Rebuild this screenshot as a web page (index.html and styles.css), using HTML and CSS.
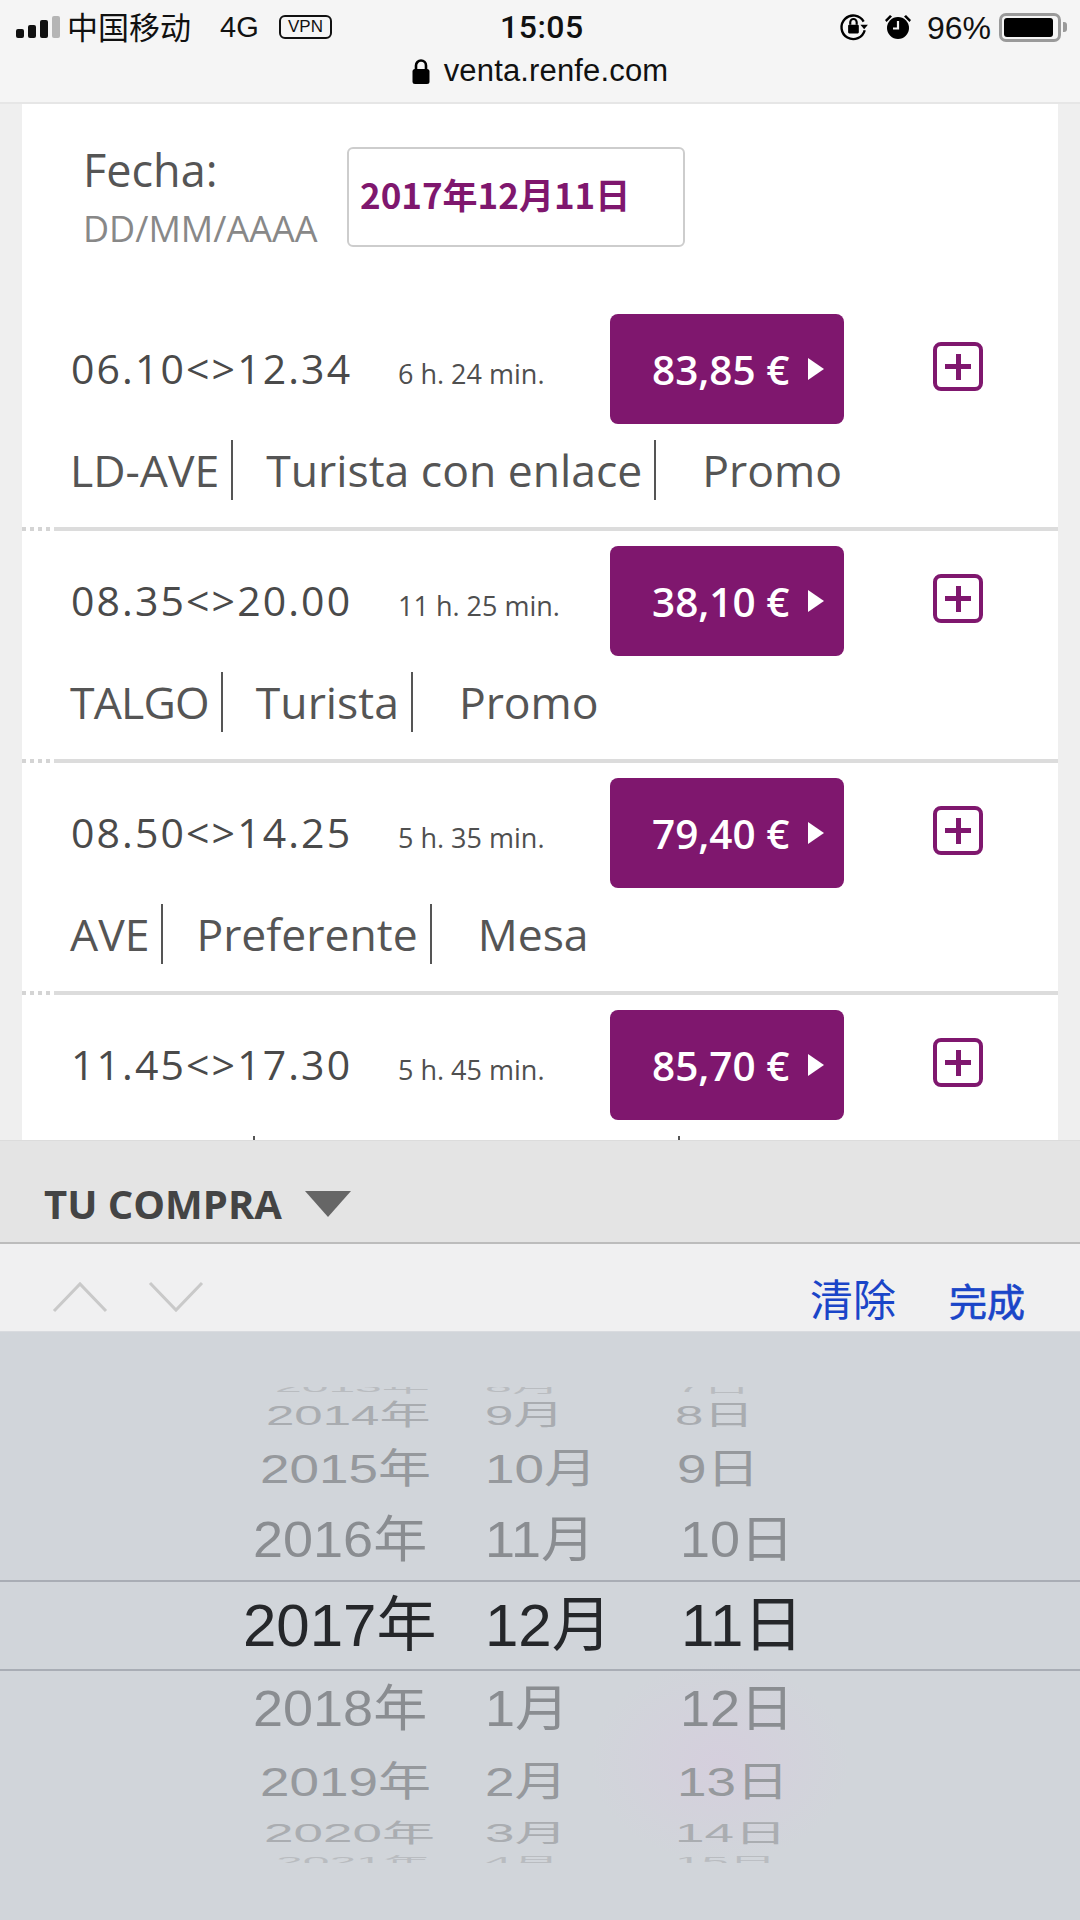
FILE: index.html
```html
<!DOCTYPE html>
<html lang="es">
<head>
<meta charset="utf-8">
<title>venta.renfe.com</title>
<link rel="stylesheet" href="styles.css">
</head>
<body>
<div class="screen">
  <header class="topbar">
    <div class="status">
      <div class="status-left">
        <span class="signal"><i class="b1"></i><i class="b2"></i><i class="b3"></i><i class="b4"></i></span>
        <span class="carrier">中国移动</span>
        <span class="net">4G</span>
        <span class="vpn">VPN</span>
      </div>
      <span class="clock">15:05</span>
      <div class="status-right">
        <svg class="ico-rot" width="30" height="30" viewBox="0 0 28 28"><path d="M23 9A11 11 0 1 0 24 17" fill="none" stroke="#000" stroke-width="2.2"/><path d="M20 12h7l-3.500 4z" fill="#000"/><rect x="8.500" y="12" width="10" height="8" rx="1" fill="#000"/><path d="M10.500 12V9.500a3 3 0 0 1 6 0V12" fill="none" stroke="#000" stroke-width="2"/></svg>
        <svg class="ico-alarm" width="28" height="28" viewBox="0 0 28 28"><circle cx="14" cy="15" r="11" fill="#000"/><path d="M14 8v7.500h-5" fill="none" stroke="#f4f4f4" stroke-width="2.200"/><path d="M1 7l5-5 2 1.500-5.500 5.500zM27 7l-5-5-2 1.500 5.500 5.500z" fill="#000"/></svg>
        <span class="pct">96%</span>
        <span class="battery"><span class="battery-fill"></span></span>
        <span class="battery-tip"></span>
      </div>
    </div>
    <div class="url">
      <svg width="18" height="25" viewBox="0 0 18 25"><rect x="0.500" y="10" width="17" height="15" rx="2.500" fill="#000"/><path d="M4 11V6.500a5 5 0 0 1 10 0V11" fill="none" stroke="#000" stroke-width="2.600"/></svg>
      <span>venta.renfe.com</span>
    </div>
  </header>

  <main class="main">
    <div class="card">
      <section class="date-row">
        <div class="date-label">
          <div class="fecha">Fecha:</div>
          <div class="fmt">DD/MM/AAAA</div>
        </div>
        <div class="date-input">2017年12月11日</div>
      </section>

      <article class="trip">
        <div class="trip-top">
          <div class="times"><span class="time">06.10&lt;&gt;12.34</span><span class="dur">6 h. 24 min.</span></div>
          <button class="price">83,85 €<span class="tri"></span></button>
          <span class="plus"></span>
        </div>
        <div class="trip-tags"><span class="tag">LD-AVE</span><span class="tag">Turista con enlace</span><span class="tag last">Promo</span></div>
      </article>
      <div class="divider"></div>

      <article class="trip">
        <div class="trip-top">
          <div class="times"><span class="time">08.35&lt;&gt;20.00</span><span class="dur">11 h. 25 min.</span></div>
          <button class="price">38,10 €<span class="tri"></span></button>
          <span class="plus"></span>
        </div>
        <div class="trip-tags"><span class="tag tight">TALGO</span><span class="tag">Turista</span><span class="tag last">Promo</span></div>
      </article>
      <div class="divider"></div>

      <article class="trip">
        <div class="trip-top">
          <div class="times"><span class="time">08.50&lt;&gt;14.25</span><span class="dur">5 h. 35 min.</span></div>
          <button class="price">79,40 €<span class="tri"></span></button>
          <span class="plus"></span>
        </div>
        <div class="trip-tags"><span class="tag">AVE</span><span class="tag">Preferente</span><span class="tag last">Mesa</span></div>
      </article>
      <div class="divider"></div>

      <article class="trip">
        <div class="trip-top">
          <div class="times"><span class="time">11.45&lt;&gt;17.30</span><span class="dur">5 h. 45 min.</span></div>
          <button class="price">85,70 €<span class="tri"></span></button>
          <span class="plus"></span>
        </div>
        <div class="trip-tags"><span class="stub stub-a"></span><span class="stub stub-b"></span></div>
      </article>
    </div>
  </main>

  <section class="dock">
    <span class="dock-title">TU COMPRA</span>
    <span class="dock-tri"></span>
  </section>

  <section class="toolbar">
    <div class="chevrons">
      <svg width="56" height="32" viewBox="0 0 56 32"><path d="M2 30L28 3l26 27" fill="none" stroke="#c9c9c9" stroke-width="3"/></svg>
      <svg width="56" height="32" viewBox="0 0 56 32"><path d="M2 2l26 27L54 2" fill="none" stroke="#c9c9c9" stroke-width="3"/></svg>
    </div>
    <span class="tool-clear">清除</span>
    <span class="tool-done">完成</span>
  </section>

  <section class="picker">
    <div class="wheel">
      <div class="wrow w0"><span class="y">2013年</span><span class="m">8月</span><span class="d">7日</span></div>
      <div class="wrow w1"><span class="y">2014年</span><span class="m">9月</span><span class="d">8日</span></div>
      <div class="wrow w2"><span class="y">2015年</span><span class="m">10月</span><span class="d">9日</span></div>
      <div class="wrow w3"><span class="y">2016年</span><span class="m">11月</span><span class="d">10日</span></div>
      <div class="wrow w4"><span class="y">2017年</span><span class="m">12月</span><span class="d">11日</span></div>
      <div class="wrow w5"><span class="y">2018年</span><span class="m">1月</span><span class="d">12日</span></div>
      <div class="wrow w6"><span class="y">2019年</span><span class="m">2月</span><span class="d">13日</span></div>
      <div class="wrow w7"><span class="y">2020年</span><span class="m">3月</span><span class="d">14日</span></div>
      <div class="wrow w8"><span class="y">2021年</span><span class="m">4月</span><span class="d">15日</span></div>
    </div>
  </section>
</div>
</body>
</html>
```

FILE: styles.css
```css
* { box-sizing: border-box; }
html, body { margin: 0; padding: 0; }
body { width: 1080px; height: 1920px; overflow: hidden; font-family: "Open Sans", "Noto Sans CJK SC", sans-serif; }
.screen { width: 1080px; height: 1920px; display: flex; flex-direction: column; overflow: hidden; background: #efefef; }

/* Top bar */
.topbar { height: 104px; flex: none; background: #f5f5f5; border-bottom: 2px solid #e6e6e6; font-family: "Liberation Sans", "Noto Sans CJK SC", sans-serif; color: #111; }
.status { height: 54px; position: relative; display: flex; align-items: center; justify-content: space-between; padding: 0 13px 0 16px; }
.status-left, .status-right { display: flex; align-items: center; }
.signal { display: flex; align-items: flex-end; gap: 4px; height: 22px; margin-right: 7px; }
.signal i { display: block; width: 8px; border-radius: 2px; background: #111; }
.signal .b1 { height: 9px; }
.signal .b2 { height: 13px; }
.signal .b3 { height: 18px; }
.signal .b4 { height: 22px; background: #b5b5b5; }
.carrier { font-size: 31px; width: 153px; margin-top: -4px; }
.net { font-size: 29px; width: 59px; }
.vpn { font-size: 17px; line-height: 20px; height: 24px; width: 53px; text-align: center; border: 2px solid #111; border-radius: 6px; }
.clock { position: absolute; left: 500px; top: 9px; font-family: Roboto, sans-serif; font-size: 32px; font-weight: 500; line-height: 36px; letter-spacing: 0.500px; }
.ico-rot { margin-right: 15px; margin-left: -3px; }
.ico-alarm { margin-right: 15px; }
.pct { font-size: 32px; margin-right: 8px; margin-top: 2px; }
.battery { width: 62px; height: 29px; border: 3px solid #9a9a9a; border-radius: 7px; padding: 2px; display: block; }
.battery-fill { display: block; width: 94%; height: 100%; background: #000; border-radius: 3px; }
.battery-tip { width: 4px; height: 10px; margin-left: 2px; background: #9a9a9a; border-radius: 0 3px 3px 0; }
.url { display: flex; justify-content: center; align-items: center; gap: 14px; font-size: 31px; line-height: 36px; letter-spacing: 0.150px; margin-top: -1px; }

/* Main list */
.main { height: 1036px; flex: none; overflow: hidden; padding: 0 22px; background: #efefef; }
.card { width: 1036px; background: #fff; color: #4d4d4d; }
.date-row { height: 195px; display: flex; padding: 39px 0 0 61px; }
.date-label { width: 264px; }
.fecha { font-size: 45px; line-height: 52px; color: #555; margin-top: 1px; }
.fmt { font-size: 36px; line-height: 44px; color: #888; margin-top: 11px; }
.date-input { width: 338px; height: 100px; margin-top: 4px; border: 2px solid #cdcdcd; border-radius: 6px; padding: 19px 0 0 11px; font-size: 35px; line-height: 52px; font-weight: 700; color: #7f176e; font-family: "Noto Sans CJK SC", sans-serif; }

.trip { height: 228px; padding: 15px 0 0 48px; }
.trip-top { display: flex; align-items: center; height: 110px; }
.times { width: 540px; display: flex; align-items: baseline; margin-top: -3px; padding-left: 1px; }
.time { width: 327px; font-size: 41px; letter-spacing: 2.100px; color: #4a4a4a; white-space: nowrap; }
.dur { font-size: 27px; color: #4f4f4f; white-space: nowrap; }
.price { width: 234px; height: 110px; background: #7f176e; border: 0; border-radius: 8px; color: #fff; font-family: "Open Sans", sans-serif; font-size: 40.500px; font-weight: 600; display: flex; align-items: center; padding: 0 0 0 42px; white-space: nowrap; }
.tri { width: 0; height: 0; margin-left: 19px; border-left: 16px solid #fff; border-top: 11px solid transparent; border-bottom: 11px solid transparent; }
.plus { width: 50px; height: 49px; margin: -5px 0 0 89px; border: 4px solid #7f176e; border-radius: 8px; background: linear-gradient(#7f176e, #7f176e) center / 26px 5px no-repeat, linear-gradient(#7f176e, #7f176e) center / 5px 26px no-repeat; }
.trip-tags { display: flex; height: 60px; margin-top: 16px; font-size: 44.500px; line-height: 60px; color: #555; }
.tag { padding-right: 12px; margin-right: 33px; border-right: 2px solid #555; white-space: nowrap; }
.tag + .tag { margin-right: 46px; }
.tag.tight { letter-spacing: -0.800px; }
.tag.last { border-right: 0; padding: 0; margin: 0; }
.stub { display: block; height: 60px; border-right: 2px solid #555; }
.stub-a { width: 185px; }
.stub-b { width: 425px; }
.divider { height: 4px; background: linear-gradient(#dcdcdc, #dcdcdc) 32px 0 / 100% 100% no-repeat, repeating-linear-gradient(90deg, #d4d4d4 0 4px, transparent 4px 8px); }

/* Dock */
.dock { height: 104px; flex: none; background: #e4e4e4; border-top: 1px solid #dcdcdc; border-bottom: 2px solid #bcbcbc; display: flex; align-items: center; padding: 24px 0 0 44px; }
.dock-title { font-size: 40px; font-weight: 700; color: #444; white-space: nowrap; }
.dock-tri { width: 0; height: 0; margin-left: 23px; border-top: 26px solid #666; border-left: 23px solid transparent; border-right: 23px solid transparent; }

/* Toolbar */
.toolbar { height: 87px; flex: none; background: #f0f0f1; display: flex; align-items: center; padding: 0 55px 0 52px; font-family: "Noto Sans CJK SC", sans-serif; color: #1a45c8; }
.chevrons { display: flex; gap: 40px; flex: 1; margin-top: 18px; }
.tool-clear { font-size: 43px; margin-right: 53px; margin-top: 18px; }
.tool-done { font-size: 38px; -webkit-text-stroke: 0.700px #1a45c8; margin-top: 24px; }

/* Picker */
.picker { flex: 1; padding-top: 55px; background: radial-gradient(ellipse 130px 100px at 720px 430px, #d5cfdd 0%, rgba(213, 207, 221, 0) 100%), #d1d5da; border-top: 1px solid #d9dbdf; font-family: "Liberation Sans", "Noto Sans CJK SC", sans-serif; }
.wrow { display: grid; grid-template-columns: 484px 191px 1fr; grid-template-rows: 100%; align-items: center; overflow: hidden; white-space: nowrap; }
.wrow span { display: block; transform: scaleY(var(--sy)); line-height: 1; }
.wrow .y { padding-left: var(--yx); }
.wrow .m { padding-left: 1px; }
.wrow .d { padding-left: var(--dx); }
.w0 { height: 7px; font-size: 48px; color: #b9bcc0; --sy: 0.300; --yx: 275px; --dx: 1px; align-items: end; }
.w0 span { transform-origin: 50% 100%; }
.w1 { height: 42px; font-size: 51px; color: #a9acb0; --sy: 0.560; --yx: 266px; --dx: 0px; }
.w2 { height: 64px; font-size: 53px; color: #96999d; --sy: 0.770; --yx: 260px; --dx: 2px; }
.w3 { height: 80px; font-size: 54px; color: #8a8d91; --sy: 0.920; --yx: 253px; --dx: 5px; }
.w4 { height: 91px; font-size: 60px; color: #25272a; --sy: 1; --yx: 243px; --dx: 6px; border-top: 2px solid #a9adb5; border-bottom: 2px solid #a9adb5; }
.w5 { height: 76px; font-size: 54px; color: #8a8d91; --sy: 0.920; --yx: 253px; --dx: 5px; }
.w6 { height: 68px; font-size: 53px; color: #96999d; --sy: 0.770; --yx: 260px; --dx: 2px; }
.w7 { height: 36px; font-size: 53px; color: #aaadb1; --sy: 0.470; --yx: 264px; --dx: 0px; }
.w8 { height: 12px; padding-top: 5px; font-size: 48px; color: #b9bcc0; --sy: 0.250; --yx: 276px; --dx: 0px; align-items: start; }
.w8 span { transform-origin: 50% 0; }
```
